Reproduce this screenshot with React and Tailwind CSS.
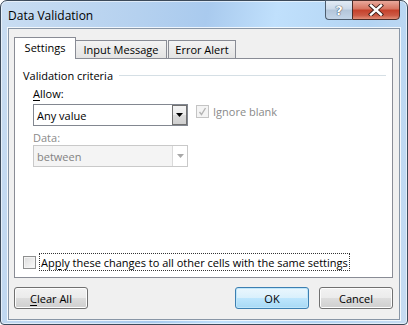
import React from "react";

// Win7-style "Data Validation" dialog

function Checkbox({ checked, disabled }) {
    return (
        <div
            className={`w-[13px] h-[13px] border flex items-center justify-center ${
                disabled
                    ? "border-[#c4c4c4] bg-[#f4f4f4]"
                    : "border-[#8e8f8f] bg-[linear-gradient(135deg,#dcdcdc,#fbfbfb)] shadow-[inset_0_0_0_1px_#f4f4f4]"
            }`}
        >
            {checked && (
                <svg width="9" height="9" viewBox="0 0 9 9">
                    <path d="M1.5 5 L3.5 7.5 L7.5 1" fill="none" stroke={disabled ? "#b4b4b4" : "#333"} strokeWidth="1.4" />
                </svg>
            )}
        </div>
    );
}

function Button({ children, primary }) {
    return (
        <button
            className={`h-[22px] rounded-[3px] border text-[11px] text-black ${
                primary
                    ? "w-[74px] border-[#3c7fb1] shadow-[inset_0_0_0_1px_#bfe6fa] bg-[linear-gradient(#eaf6fd_0%,#d9f0fc_50%,#bee6fd_50%,#a7d9f5_100%)]"
                    : "w-[74px] border-[#707070] shadow-[inset_0_0_0_1px_#fcfcfc] bg-[linear-gradient(#f2f2f2_0%,#ebebeb_50%,#dddddd_50%,#cfcfcf_100%)]"
            }`}
        >
            {children}
        </button>
    );
}

export default function App() {
    return (
        <div className="w-[408px] h-[325px] font-['Open_Sans',sans-serif] text-[11px] leading-[15px] text-black">
            <div className="w-full h-full flex flex-col rounded-t-[7px] rounded-b-[4px] border border-[#3c4a5a] shadow-[inset_0_0_0_1px_rgba(255,255,255,0.55)] bg-[linear-gradient(100deg,#c9ddf2_0%,#b5d1ef_30%,#a9caee_45%,#c0e0fc_60%,#b3d4f3_80%,#c7dcf2_100%)] px-[6px] pb-[3px]">
                {/* title bar */}
                <div className="h-[26px] flex items-start">
                    <span className="mt-[7px] ml-[1px] text-[12px]">Data Validation</span>
                    <div className="ml-auto -mt-px mr-px flex">
                        <div className="w-[27px] h-[20px] border border-[#4d5d6e] border-r-0 rounded-bl-[4px] bg-[linear-gradient(#e2ebf5_0%,#cbd9e9_45%,#b3c5d9_50%,#c3d5e8_100%)] flex items-center justify-center">
                            <span className="font-['DejaVu_Sans',sans-serif] font-bold text-[13px] text-white [text-shadow:0_0_1px_#2d3a4a,0_0_1px_#2d3a4a]">?</span>
                        </div>
                        <div className="w-[48px] h-[20px] border border-[#4d2d28] rounded-br-[4px] bg-[linear-gradient(#e9a99c_0%,#d6735f_45%,#c5402a_50%,#cc5a45_80%,#e28f78_100%)] flex items-center justify-center">
                            <svg width="16" height="12" viewBox="0 0 16 12">
                                <path d="M3 1.5 L13 10.5 M13 1.5 L3 10.5" stroke="#3b1d18" strokeWidth="4.2" strokeLinecap="square" />
                                <path d="M3 1.5 L13 10.5 M13 1.5 L3 10.5" stroke="#ffffff" strokeWidth="2.4" strokeLinecap="square" />
                            </svg>
                        </div>
                    </div>
                </div>

                {/* client area */}
                <div className="flex-1 border border-white/80">
                    <div className="h-full border border-[#8896a6] bg-[#f0f0f0] flex flex-col pt-[8px] pl-[5px] pr-[6px]">
                        {/* tabs */}
                        <div className="h-[21px] flex items-end">
                            <div className="relative z-10 w-[62px] h-[22px] -mb-px border border-b-0 border-[#898c95] bg-white flex items-center justify-center pb-[2px]">
                                Settings
                            </div>
                            <div className="w-[92px] h-[18px] -ml-px border border-b-0 border-[#898c95] bg-[linear-gradient(#f3f3f3,#e3e3e3)] flex items-center justify-center">
                                Input Message
                            </div>
                            <div className="w-[68px] h-[18px] ml-px border border-b-0 border-[#898c95] bg-[linear-gradient(#f3f3f3,#e3e3e3)] flex items-center justify-center">
                                Error Alert
                            </div>
                        </div>

                        {/* panel */}
                        <div className="h-[220px] border border-[#898c95] bg-white flex flex-col">
                            <div className="mt-[9px] pl-[8px] pr-[6px] flex items-center">
                                <span>Validation criteria</span>
                                <div className="flex-1 h-px ml-[6px] bg-[#d5dfe5]" />
                            </div>
                            <div className="mt-[3px] pl-[18px]">
                                <span className="underline underline-offset-2">A</span>llow:
                            </div>
                            <div className="mt-[3px] pl-[18px] flex items-start">
                                <div className="w-[155px] h-[22px] border border-[#828790] bg-white flex items-center">
                                    <span className="pl-[3px] flex-1">Any value</span>
                                    <div className="w-[15px] h-[20px] mr-0 border border-[#707070] bg-[linear-gradient(#f4f4f4_0%,#ebebeb_50%,#dcdcdc_50%,#cfcfcf_100%)] flex items-center justify-center">
                                        <svg width="7" height="4" viewBox="0 0 7 4">
                                            <path d="M0 0 H7 L3.5 4 Z" fill="#000" />
                                        </svg>
                                    </div>
                                </div>
                                <div className="ml-[8px] flex items-center gap-[4px] text-[#8a8a8a]">
                                    <Checkbox checked disabled />
                                    <span>Ignore blank</span>
                                </div>
                            </div>
                            <div className="mt-[4px] pl-[18px] text-[#8a8a8a]">Data:</div>
                            <div className="pl-[18px]">
                                <div className="w-[155px] h-[22px] border border-[#c9c9c9] bg-[#f4f4f4] flex items-center text-[#838383]">
                                    <span className="pl-[3px] flex-1">between</span>
                                    <div className="w-[15px] h-[20px] border-l border-[#dadada] bg-white flex items-center justify-center">
                                        <svg width="7" height="4" viewBox="0 0 7 4">
                                            <path d="M0 0 H7 L3.5 4 Z" fill="#a8a8a8" />
                                        </svg>
                                    </div>
                                </div>
                            </div>
                            <div className="mt-auto mb-[6px] pl-[8px] flex items-center">
                                <Checkbox />
                                <span className="ml-[3px] h-[18px] border border-dotted border-[#333] px-[1px] flex items-center">
                                    Ap<span className="underline underline-offset-2">p</span>ly these changes to all other cells with the same settings
                                </span>
                            </div>
                        </div>

                        {/* buttons */}
                        <div className="mt-[9px] flex items-start">
                            <Button>
                                <span className="underline underline-offset-2">C</span>lear All
                            </Button>
                            <div className="ml-auto flex gap-[10px]">
                                <Button primary>OK</Button>
                                <Button>Cancel</Button>
                            </div>
                        </div>
                    </div>
                </div>
            </div>
        </div>
    );
}
